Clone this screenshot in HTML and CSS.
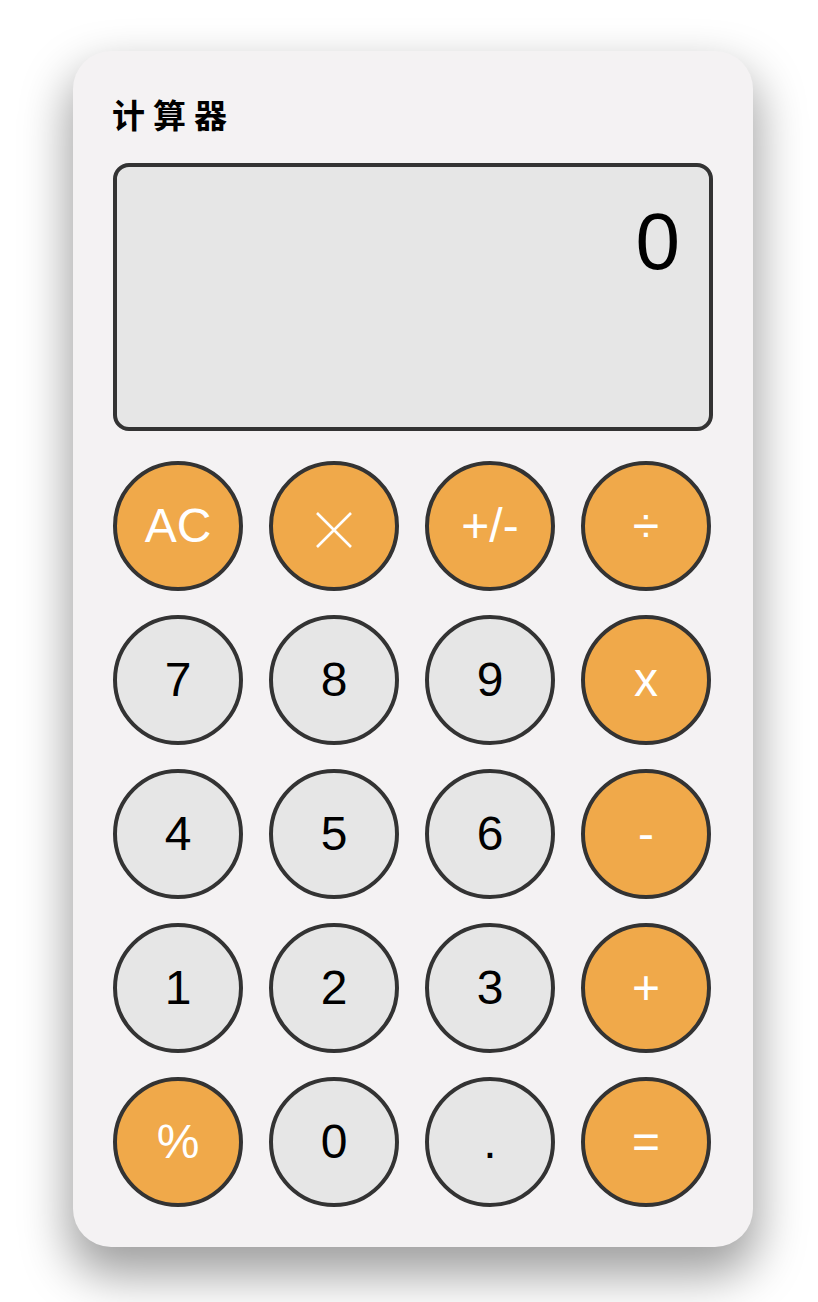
FILE: index.html
```html
<!DOCTYPE html>
<html lang="zh">
<head>
<meta charset="utf-8">
<title>计算器</title>
<link rel="stylesheet" href="styles.css">
</head>
<body>
<div class="page">
  <div class="calc">
    <h1 class="title">计算器</h1>
    <div class="display"><span class="value">0</span></div>
    <div class="keys">
      <button class="key op">AC</button>
      <button class="key op"><svg class="icon-x" viewBox="0 0 36 36" width="36" height="36"><path d="M1 1 L35 35 M35 1 L1 35" stroke="#fff" stroke-width="2.6" fill="none"/></svg></button>
      <button class="key op">+/-</button>
      <button class="key op">÷</button>
      <button class="key num">7</button>
      <button class="key num">8</button>
      <button class="key num">9</button>
      <button class="key op">x</button>
      <button class="key num">4</button>
      <button class="key num">5</button>
      <button class="key num">6</button>
      <button class="key op">-</button>
      <button class="key num">1</button>
      <button class="key num">2</button>
      <button class="key num">3</button>
      <button class="key op">+</button>
      <button class="key op">%</button>
      <button class="key num">0</button>
      <button class="key num">.</button>
      <button class="key op">=</button>
    </div>
  </div>
</div>
</body>
</html>
```
FILE: styles.css
```css
html, body {
  margin: 0;
  padding: 0;
  background: #ffffff;
}
.page {
  padding: 51px 0 55px 73px;
}
.calc {
  box-sizing: border-box;
  width: 680px;
  height: 1196px;
  padding: 41px 40px 40px 40px;
  background: #f4f2f3;
  border-radius: 38px;
  box-shadow: 0 24px 48px 4px rgba(0, 0, 0, 0.38);
  display: flex;
  flex-direction: column;
}
.title {
  margin: 0 0 27px -1px;
  font-family: "Noto Sans CJK SC", "Noto Sans", sans-serif;
  font-size: 33px;
  line-height: 44px;
  font-weight: 700;
  letter-spacing: 8px;
  color: #000;
}
.display {
  box-sizing: border-box;
  width: 600px;
  height: 268px;
  border: 4px solid #333333;
  border-radius: 16px;
  background: #e6e6e6;
  padding: 29px 29px 0 0;
  text-align: right;
  font-family: "Liberation Sans", Arial, sans-serif;
  font-size: 80px;
  line-height: 1.149;
  color: #000;
}
.keys {
  margin-top: 30px;
  display: grid;
  grid-template-columns: repeat(4, 130px);
  grid-auto-rows: 130px;
  column-gap: 26px;
  row-gap: 24px;
}
.key {
  box-sizing: border-box;
  width: 130px;
  height: 130px;
  border: 4px solid #333333;
  border-radius: 50%;
  padding: 0;
  margin: 0;
  display: flex;
  align-items: center;
  justify-content: center;
  font-family: "Liberation Sans", Arial, sans-serif;
  font-size: 48px;
  line-height: 1.149;
  cursor: pointer;
}
.num {
  background: #e6e6e6;
  color: #000;
}
.op {
  background: #f0a94a;
  color: #fff;
}
.icon-x {
  display: block;
  margin-top: 8px;
}
```
